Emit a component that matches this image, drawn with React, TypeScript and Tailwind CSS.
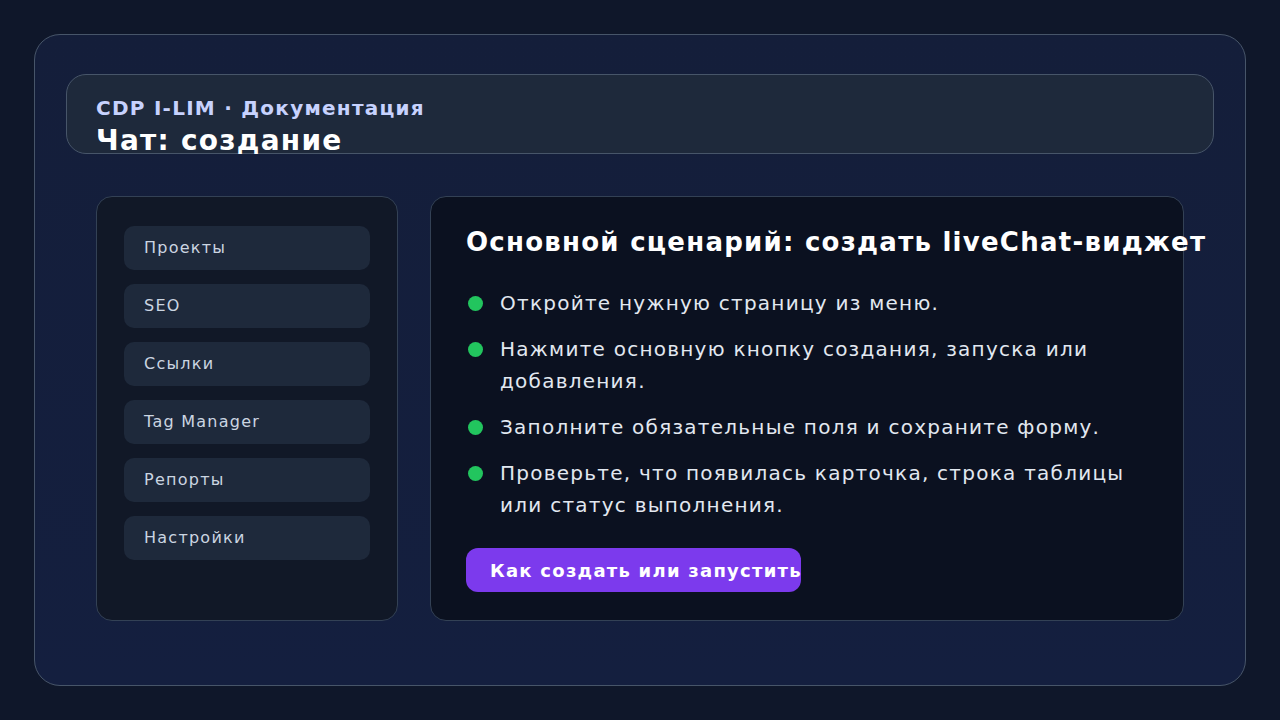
const navItems = ['Проекты', 'SEO', 'Ссылки', 'Tag Manager', 'Репорты', 'Настройки'];

const steps = [
  'Откройте нужную страницу из меню.',
  'Нажмите основную кнопку создания, запуска или добавления.',
  'Заполните обязательные поля и сохраните форму.',
  'Проверьте, что появилась карточка, строка таблицы или статус выполнения.',
];

export default function App() {
  return (
    <div
      className="w-[1280px] h-[720px] bg-[#0f172a] p-[34px] overflow-hidden tracking-[1.25px]"
      style={{ fontFamily: '"DejaVu Sans", "Noto Sans", sans-serif' }}
    >
      <div className="h-[652px] rounded-[26px] border border-[#475569] bg-gradient-to-b from-[#141e3a] to-[#141f3f] px-[31px] pt-[39px]">
        {/* header */}
        <header className="h-[80px] rounded-[20px] border border-[#475569] bg-[#1e293b] px-[29px] pt-[21px]">
          <div className="text-[20px] leading-[24px] font-bold text-[#c7d2fe] whitespace-nowrap">CDP I-LIM · Документация</div>
          <h1 className="mt-[4px] text-[28px] leading-[34px] font-bold text-white whitespace-nowrap">Чат: создание</h1>
        </header>

        <div className="mt-[42px] mx-[30px] flex gap-[32px]">
          {/* sidebar */}
          <nav className="w-[302px] h-[425px] shrink-0 rounded-[16px] border border-[#334155] bg-[#111827] pt-[29px] px-[27px] flex flex-col gap-[14px]">
            {navItems.map((item) => (
              <div
                key={item}
                className="h-[44px] rounded-[10px] bg-[#1e293b] px-[20px] flex items-center text-[16px] text-[#cbd5e1] whitespace-nowrap"
              >
                {item}
              </div>
            ))}
          </nav>

          {/* main panel */}
          <section className="flex-1 min-w-0 h-[425px] rounded-[16px] border border-[#334155] bg-[#0b1120] pt-[29px] px-[35px]">
            <h2 className="text-[26px] leading-[32px] font-bold text-white whitespace-nowrap">
              Основной сценарий: создать liveChat-виджет
            </h2>
            <ul className="mt-[29px] flex flex-col gap-[14px]">
              {steps.map((s) => (
                <li key={s} className="flex items-start gap-[17px] text-[20px] leading-[32px] text-[#e2e8f0]">
                  <span className="mt-[9px] ml-[2px] w-[15px] h-[15px] shrink-0 rounded-full bg-[#22c55e]" />
                  <span>{s}</span>
                </li>
              ))}
            </ul>
            <button
              type="button"
              className="mt-[27px] w-[335px] h-[44px] rounded-[12px] bg-[#7c3aed] pl-[24px] text-left text-[18px] font-bold text-white whitespace-nowrap overflow-hidden"
            >
              Как создать или запустить
            </button>
          </section>
        </div>
      </div>
    </div>
  );
}
